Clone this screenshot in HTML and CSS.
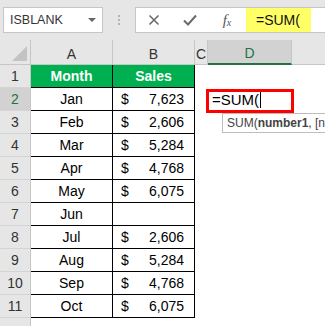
FILE: index.html
```html
<!DOCTYPE html>
<html lang="en">
<head>
    <meta charset="UTF-8">
    <meta name="viewport" content="width=device-width, initial-scale=1.0">
    <title>SUM formula</title>
    <link rel="stylesheet" href="styles.css">
</head>
<body>
    <div class="app">
        <!-- formula bar -->
        <div class="toolbar">
            <div class="namebox">
                <span>ISBLANK</span>
                <span class="caret"></span>
            </div>
            <div class="grip"><i></i><i></i><i></i></div>
            <div class="formula">
                <span class="fbtn">
                    <svg width="12" height="12" viewBox="0 0 12 12"><path d="M1.5 1.5 L10.5 10.5 M10.5 1.5 L1.5 10.5" stroke="#6b6b6b" stroke-width="1.6" fill="none"/></svg>
                </span>
                <span class="fbtn">
                    <svg width="14" height="12" viewBox="0 0 14 12"><path d="M1 6.5 L5 10.5 L13 1.5" stroke="#6b6b6b" stroke-width="2" fill="none"/></svg>
                </span>
                <span class="fx">f<sub>x</sub></span>
                <span class="fvalue">=SUM(</span>
            </div>
        </div>

        <!-- sheet -->
        <div class="sheet">
            <div class="corner"><span class="tri"></span></div>
            <div class="colhead">A</div>
            <div class="colhead">B</div>
            <div class="colhead">C</div>
            <div class="colhead active-col">D</div>
            <div class="colhead last"></div>

            <div class="rowhead">1</div>
            <div class="cell t head">Month</div>
            <div class="cell t head">Sales</div>
            <div class="cell"></div>
            <div class="cell"></div>
            <div class="cell"></div>

            <div class="rowhead active-row">2</div>
            <div class="cell t">Jan</div>
            <div class="cell t money"><span>$</span><span>7,623</span></div>
            <div class="cell"></div>
            <div class="cell editing">
                <span class="entry">=SUM(<span class="cursor"></span></span>
                <div class="frame"></div>
                <div class="tip">SUM(<b>number1</b>, [nu</div>
            </div>
            <div class="cell"></div>

            <div class="rowhead">3</div>
            <div class="cell t">Feb</div>
            <div class="cell t money"><span>$</span><span>2,606</span></div>
            <div class="cell"></div><div class="cell"></div><div class="cell"></div>

            <div class="rowhead">4</div>
            <div class="cell t">Mar</div>
            <div class="cell t money"><span>$</span><span>5,284</span></div>
            <div class="cell"></div><div class="cell"></div><div class="cell"></div>

            <div class="rowhead">5</div>
            <div class="cell t">Apr</div>
            <div class="cell t money"><span>$</span><span>4,768</span></div>
            <div class="cell"></div><div class="cell"></div><div class="cell"></div>

            <div class="rowhead">6</div>
            <div class="cell t">May</div>
            <div class="cell t money"><span>$</span><span>6,075</span></div>
            <div class="cell"></div><div class="cell"></div><div class="cell"></div>

            <div class="rowhead">7</div>
            <div class="cell t">Jun</div>
            <div class="cell t money"></div>
            <div class="cell"></div><div class="cell"></div><div class="cell"></div>

            <div class="rowhead">8</div>
            <div class="cell t">Jul</div>
            <div class="cell t money"><span>$</span><span>2,606</span></div>
            <div class="cell"></div><div class="cell"></div><div class="cell"></div>

            <div class="rowhead">9</div>
            <div class="cell t">Aug</div>
            <div class="cell t money"><span>$</span><span>5,284</span></div>
            <div class="cell"></div><div class="cell"></div><div class="cell"></div>

            <div class="rowhead">10</div>
            <div class="cell t">Sep</div>
            <div class="cell t money"><span>$</span><span>4,768</span></div>
            <div class="cell"></div><div class="cell"></div><div class="cell"></div>

            <div class="rowhead">11</div>
            <div class="cell t">Oct</div>
            <div class="cell t money"><span>$</span><span>6,075</span></div>
            <div class="cell"></div><div class="cell"></div><div class="cell"></div>

            <div class="rowhead"></div>
            <div class="cell"></div><div class="cell"></div><div class="cell"></div><div class="cell"></div><div class="cell"></div>
        </div>
    </div>
</body>
</html>
```

FILE: styles.css
```css
body {
    margin: 0;
    font-family: 'Liberation Sans', Arial, sans-serif;
    background-color: white;
    overflow: hidden;
}
.app {
    width: 325px;
    height: 326px;
    overflow: hidden;
}

/* formula bar */
.toolbar {
    height: 40px;
    background-color: #e6e6e6;
    display: flex;
    align-items: flex-start;
    padding-top: 7px;
    box-sizing: border-box;
}
.namebox {
    margin-left: 3px;
    width: 100px;
    height: 26px;
    box-sizing: border-box;
    background-color: white;
    border: 1px solid #c6c6c6;
    display: flex;
    align-items: center;
    justify-content: space-between;
    padding: 0 6px 0 6px;
    font-size: 12.5px;
    color: #333;
}
.caret {
    width: 0;
    height: 0;
    border-left: 4px solid transparent;
    border-right: 4px solid transparent;
    border-top: 4px solid #666;
}
.grip {
    width: 32px;
    height: 26px;
    display: flex;
    flex-direction: column;
    align-items: center;
    justify-content: center;
    gap: 2px;
}
.grip i {
    width: 2px;
    height: 2px;
    background-color: #b4b4b4;
}
.formula {
    flex: 1;
    height: 26px;
    box-sizing: border-box;
    background-color: white;
    border: 1px solid #c6c6c6;
    border-right: none;
    display: flex;
    align-items: center;
}
.fbtn {
    width: 36px;
    display: flex;
    justify-content: center;
    align-items: center;
}
.fx {
    font-family: 'Liberation Serif', serif;
    font-style: italic;
    font-size: 15px;
    color: #555;
    width: 38px;
    text-align: center;
}
.fx sub {
    font-size: 10px;
    vertical-align: -1px;
}
.fvalue {
    align-self: stretch;
    width: 65px;
    background-color: #ffff66;
    font-size: 14px;
    padding-left: 10px;
    box-sizing: border-box;
    display: flex;
    align-items: center;
    color: #111;
}

/* sheet grid */
.sheet {
    display: grid;
    grid-template-columns: 31px 82px 82px 13px 84px 1fr;
    grid-template-rows: 25px repeat(12, 23px);
}
.corner {
    background-color: #e6e6e6;
    border-right: 1px solid #c6c6c6;
    border-bottom: 1px solid #c6c6c6;
    position: relative;
}
.tri {
    position: absolute;
    right: 3px;
    bottom: 3px;
    width: 0;
    height: 0;
    border-left: 15px solid transparent;
    border-bottom: 15px solid #c3c3c3;
}
.colhead {
    background-color: #e6e6e6;
    border-right: 1px solid #c6c6c6;
    border-bottom: 1px solid #c6c6c6;
    padding-top: 3px;
    display: flex;
    align-items: center;
    justify-content: center;
    font-size: 14px;
    color: #333;
}
.colhead.last {
    border-right: none;
}
.colhead.active-col {
    background-color: #d2d2d2;
    color: #217346;
    border-bottom: 2px solid #217346;
}
.rowhead {
    background-color: #e6e6e6;
    border-right: 1px solid #c6c6c6;
    border-bottom: 1px solid #d4d4d4;
    display: flex;
    align-items: center;
    justify-content: center;
    font-size: 14px;
    color: #333;
}
.rowhead.active-row {
    background-color: #d2d2d2;
    color: #217346;
}
.cell {
    font-size: 14px;
    display: flex;
    align-items: center;
    justify-content: center;
    color: #000;
}
.cell.t {
    border-right: 1px solid #000;
    border-bottom: 1px solid #000;
}
.cell.head {
    background-color: #00b050;
    color: white;
    font-weight: bold;
}
.cell.money {
    justify-content: space-between;
    padding: 0 10px 0 8px;
}

/* active cell */
.editing {
    position: relative;
    justify-content: flex-start;
    padding-left: 4px;
}
.entry {
    font-size: 15px;
    display: flex;
    align-items: center;
}
.cursor {
    display: inline-block;
    width: 1px;
    height: 16px;
    background-color: #000;
    margin-left: 1px;
}
.frame {
    position: absolute;
    top: 1px;
    left: -2px;
    right: -2px;
    bottom: -2px;
    border: 3px solid #ff0000;
}
.tip {
    position: absolute;
    top: 25px;
    left: 14px;
    height: 18px;
    width: 110px;
    white-space: nowrap;
    overflow: hidden;
    background-color: white;
    border: 1px solid #bdbdbd;
    border-right: none;
    padding: 0 0 0 4px;
    font-size: 12px;
    color: #444;
    display: flex;
    align-items: center;
    z-index: 2;
}
.tip b {
    font-weight: bold;
}
```
